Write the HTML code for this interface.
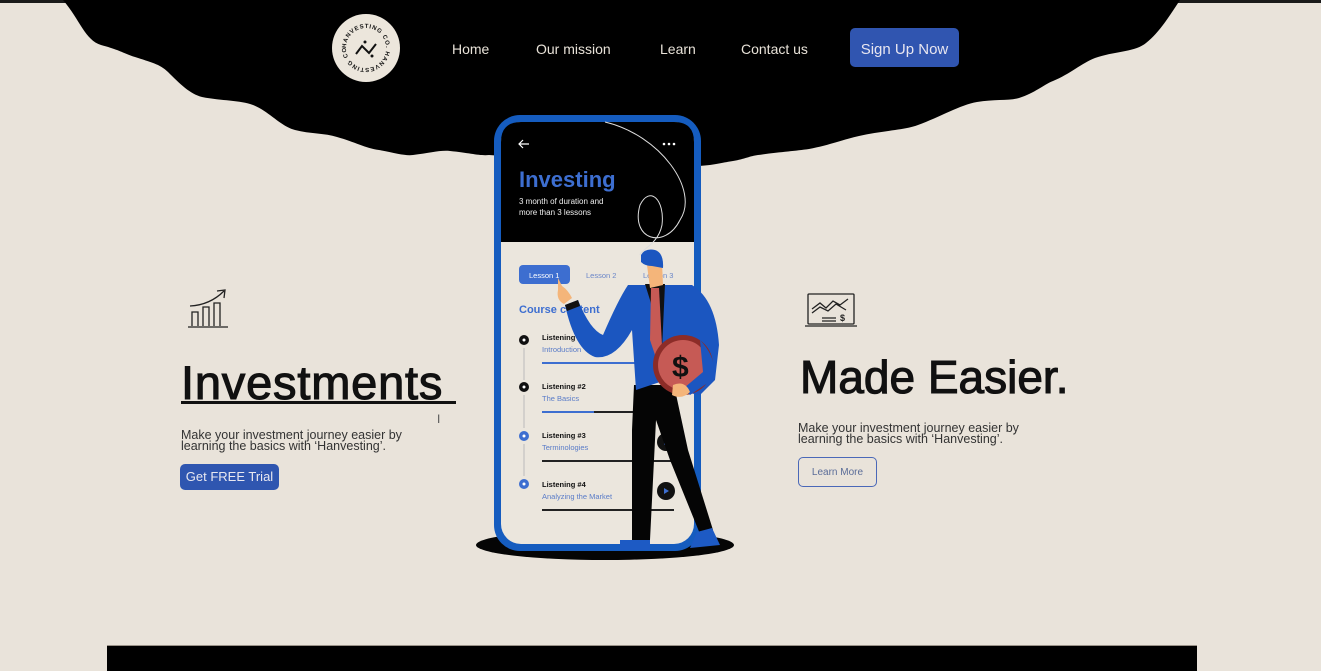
<!DOCTYPE html>
<html><head><meta charset="utf-8"><style>
*{margin:0;padding:0;box-sizing:border-box}
body{width:1321px;height:671px;overflow:hidden;background:#e9e3da;font-family:"Liberation Sans",sans-serif;position:relative}
.a{position:absolute}
.nav{color:#e8e2d8;font-size:14px;top:41px}
h1{font-weight:normal;color:#111;white-space:nowrap;-webkit-text-stroke:1.1px #111}
.p{font-size:12.5px;line-height:11px;color:#333}
</style></head><body>
<svg class="a" style="left:0;top:0" width="1321" height="671" viewBox="0 0 1321 671">
<rect x="0" y="0" width="1321" height="3" fill="#1a1a1a"/>
<path d="M63,0 C80,20 85,40 101,45 C120,50 125,54 135,57 C150,62 160,64 168,72 C180,84 190,94 202,97 C222,101 240,100 253,105 C270,112 280,126 295,130 C310,134 325,133 337,137 C355,142 365,148 379,150 C395,153 405,156 413,155 C430,153 440,150 450,151 C470,153 480,156 489,155 L560,160 C600,162 650,170 699,166 C715,165 725,162 733,161 C745,159 750,156 758,155 C780,152 795,151 809,149 C830,145 845,139 859,136 C880,131 905,130 918,125 C940,117 960,105 977,102 C995,99 1008,101 1019,98 C1035,93 1043,85 1053,81 C1070,74 1082,63 1095,58 C1115,51 1135,52 1146,43 C1160,32 1170,15 1180,0 Z" fill="#000"/>
<circle cx="366" cy="48" r="34" fill="#ece6dc"/>
<path id="lc" d="M346,48 A20,20 0 1,1 386,48 A20,20 0 1,1 346,48" fill="none"/>
<text font-size="6" font-weight="bold" fill="#111" letter-spacing="0.8"><textPath href="#lc" startOffset="0">HANVESTING CO. HANVESTING CO.</textPath></text>
<path d="M356,54 L362,46 L369,53 L376,44" fill="none" stroke="#111" stroke-width="2"/>
<circle cx="365" cy="42" r="1.5" fill="#111"/><circle cx="372" cy="56" r="1.5" fill="#111"/>
<ellipse cx="605" cy="545" rx="129" ry="15" fill="#050505"/>
<rect x="494" y="115" width="207" height="436" rx="26" fill="#155cbf"/>
<rect x="501" y="122" width="193" height="422" rx="20" fill="#ebe6dd"/>
<path d="M501,242 L501,142 Q501,122 521,122 L674,122 Q694,122 694,142 L694,242 Z" fill="#000"/>
<path d="M605,122 C660,135 700,190 680,220 C665,250 630,240 640,205 C650,185 665,200 662,225 C658,245 640,250 640,255" fill="none" stroke="#ddd" stroke-width="1"/>
<path d="M529,144 L519,144 M523,140 L519,144 L523,148" stroke="#fff" stroke-width="1.2" fill="none"/>
<circle cx="664" cy="144" r="1.3" fill="#fff"/><circle cx="669" cy="144" r="1.3" fill="#fff"/><circle cx="674" cy="144" r="1.3" fill="#fff"/>
<text x="519" y="187" font-size="22" font-weight="bold" fill="#3d6ed0">Investing</text>
<text x="519" y="204" font-size="8" fill="#eee">3 month of duration and</text>
<text x="519" y="215" font-size="8" fill="#eee">more than 3 lessons</text>
<rect x="519" y="265" width="51" height="19" rx="4" fill="#3d6ed0"/>
<text x="529" y="278" font-size="7.5" fill="#fff">Lesson 1</text>
<text x="586" y="278" font-size="7.5" fill="#6a86c8">Lesson 2</text>
<text x="643" y="278" font-size="7.5" fill="#6a86c8">Lesson 3</text>
<text x="519" y="313" font-size="11" font-weight="bold" fill="#3d6ed0">Course content</text>
<g font-size="7.5">
<circle cx="524" cy="340" r="5" fill="#111"/><circle cx="524" cy="340" r="1.5" fill="#fff"/>
<text x="542" y="340" font-weight="bold" fill="#111">Listening #1</text><text x="542" y="352" fill="#5a7cc8">Introduction</text>
<rect x="542" y="362" width="120" height="2" fill="#3d6ed0"/>
<line x1="524" y1="348" x2="524" y2="380" stroke="#bbb"/>
<circle cx="524" cy="387" r="5" fill="#111"/><circle cx="524" cy="387" r="1.5" fill="#fff"/>
<text x="542" y="389" font-weight="bold" fill="#111">Listening #2</text><text x="542" y="401" fill="#5a7cc8">The Basics</text>
<rect x="542" y="411" width="120" height="2" fill="#222"/><rect x="542" y="411" width="52" height="2" fill="#3d6ed0"/>
<line x1="524" y1="395" x2="524" y2="428" stroke="#bbb"/>
<circle cx="524" cy="436" r="5" fill="#3d6ed0"/><circle cx="524" cy="436" r="1.5" fill="#fff"/>
<text x="542" y="438" font-weight="bold" fill="#111">Listening #3</text><text x="542" y="450" fill="#5a7cc8">Terminologies</text>
<rect x="542" y="460" width="132" height="2" fill="#222"/>
<line x1="524" y1="444" x2="524" y2="476" stroke="#bbb"/>
<circle cx="524" cy="484" r="5" fill="#3d6ed0"/><circle cx="524" cy="484" r="1.5" fill="#fff"/>
<text x="542" y="487" font-weight="bold" fill="#111">Listening #4</text><text x="542" y="499" fill="#5a7cc8">Analyzing the Market</text>
<rect x="542" y="509" width="132" height="2" fill="#222"/>
</g>
<circle cx="666" cy="442" r="9" fill="#111"/><path d="M664,439 L669,442 L664,445Z" fill="#3d6ed0"/>
<circle cx="666" cy="491" r="9" fill="#111"/><path d="M664,488 L669,491 L664,494Z" fill="#3d6ed0"/>
<path d="M634,385 L674,385 L688,450 L713,530 L700,534 L670,460 L656,420 L650,540 L632,540 L632,430 Z" fill="#050505"/>
<path d="M620,540 L650,540 L650,550 L620,550 Z" fill="#1d5ac4"/>
<path d="M697,532 L712,528 L720,545 L690,548 Z" fill="#1d5ac4"/>
<path d="M628,285 L692,285 Q716,300 719,345 L715,380 L700,395 L672,390 L672,378 L636,390 L632,330 Q615,360 595,357 Q575,350 565,305 L578,300 Q590,330 603,335 Q618,300 628,285 Z" fill="#1b56c0"/>
<path d="M565,305 L578,300 L580,306 L567,311Z" fill="#111"/>
<path d="M645,284 L665,284 L662,350 L650,300Z" fill="#111"/>
<path d="M651,288 L659,288 L662,345 L655,355 L650,340Z" fill="#c65a55"/>
<circle cx="683" cy="365" r="30" fill="#8c2c28"/><circle cx="683" cy="365" r="25" fill="#c65a55"/>
<text x="672" y="377" font-size="30" font-weight="bold" fill="#111">$</text>
<path d="M700,340 Q719,360 712,380 L690,395 L684,388 L703,372Z" fill="#1b56c0"/>
<path d="M673,385 Q685,380 690,392 Q682,400 672,395Z" fill="#f4b57a"/>
<path d="M647,265 L662,262 L663,285 L650,288Z" fill="#f4b57a"/>
<path d="M558,290 Q556,300 564,304 L572,298 Q568,290 562,286 L558,278 Z" fill="#f4b57a"/>
<path d="M641,255 Q645,248 655,250 Q664,253 663,268 L652,266 Q645,266 641,262 Z" fill="#1b56c0"/>
<g stroke="#222" stroke-width="1.3" fill="none">
<path d="M188,327 L228,327 M192,326 L192,312 L198,312 L198,326 M203,326 L203,307 L209,307 L209,326 M214,326 L214,303 L220,303 L220,326 M190,306 Q210,305 224,291 M217,291 L225,290 L224,298"/>
<rect x="808" y="294" width="46" height="30" rx="1"/>
<path d="M805,326 L857,326 M812,309 L820,303 L826,308 L833,301 L840,305 L848,299 M812,313 L820,307 L828,311 L836,304 L846,310"/>
<path d="M822,318 L836,318 M822,321 L836,321"/>
</g>
<text x="840" y="321" font-size="9" font-weight="bold" fill="#222">$</text>
<text x="437" y="423" font-size="12" fill="#555">I</text>
<rect x="107" y="646" width="1090" height="25" fill="#000"/>
<rect x="107" y="645" width="1090" height="1" fill="#9a9288"/>
</svg>
<div class="a nav" style="left:452px">Home</div>
<div class="a nav" style="left:536px">Our mission</div>
<div class="a nav" style="left:660px">Learn</div>
<div class="a nav" style="left:741px">Contact us</div>
<div class="a" style="left:850px;top:28px;width:109px;height:39px;background:#3055b0;border-radius:5px;color:#e8e6f0;font-size:15px;line-height:43px;text-align:center">Sign Up Now</div>
<h1 class="a" style="left:181px;top:355px;font-size:47px;letter-spacing:0.8px">Investments</h1>
<div class="a" style="left:181px;top:401px;width:275px;height:3px;background:#111"></div>
<div class="a p" style="left:181px;top:430px">Make your investment journey easier by<br>learning the basics with ‘Hanvesting’.</div>
<div class="a" style="left:180px;top:464px;width:99px;height:26px;background:#2f56b0;border-radius:5px;color:#e8e8f0;font-size:13px;line-height:26px;text-align:center">Get FREE Trial</div>
<h1 class="a" style="left:800px;top:350px;font-size:46px">Made Easier.</h1>
<div class="a p" style="left:798px;top:423px">Make your investment journey easier by<br>learning the basics with ‘Hanvesting’.</div>
<div class="a" style="left:798px;top:457px;width:79px;height:30px;border:1.5px solid #4a68b8;border-radius:5px;color:#5a6c98;font-size:10px;display:flex;align-items:center;justify-content:center">Learn More</div>
</body></html>
